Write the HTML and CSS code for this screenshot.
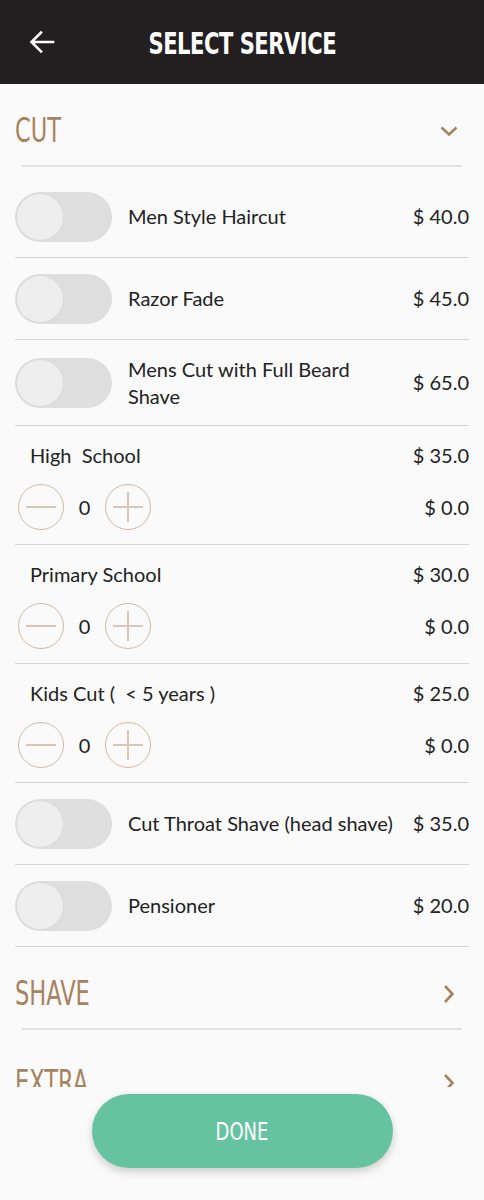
FILE: index.html
```html
<!DOCTYPE html>
<html lang="en">
<head>
    <meta charset="UTF-8">
    <meta name="viewport" content="width=device-width, initial-scale=1.0">
    <title>Select Service</title>
    <link rel="stylesheet" href="styles.css">
</head>
<body>
    <header class="topbar">
        <button class="back-btn" aria-label="Back">
            <svg width="26" height="26" viewBox="0 0 26 26"><path d="M24 13H3M12 3.5L2.5 13l9.5 9.5" fill="none" stroke="#fff" stroke-width="2.6" stroke-linecap="square"/></svg>
        </button>
        <h1><span class="narrow">SELECT SERVICE</span></h1>
    </header>

    <main class="list">
        <section class="group">
            <div class="group-head">
                <span class="narrow">CUT</span>
                <svg class="chev" width="18" height="18" viewBox="0 0 18 18"><path d="M1.5 5.5l7.5 7 7.5-7" fill="none" stroke="#a8835f" stroke-width="2.6"/></svg>
            </div>
            <div class="items">
                <div class="row">
                    <span class="toggle"><span class="knob"></span></span>
                    <span class="name">Men Style Haircut</span>
                    <span class="price">$ 40.0</span>
                </div>
                <div class="row">
                    <span class="toggle"><span class="knob"></span></span>
                    <span class="name">Razor Fade</span>
                    <span class="price">$ 45.0</span>
                </div>
                <div class="row">
                    <span class="toggle"><span class="knob"></span></span>
                    <span class="name">Mens Cut with Full Beard Shave</span>
                    <span class="price">$ 65.0</span>
                </div>
                <div class="qty-row">
                    <div class="qty-top">
                        <span class="qty-name">High&nbsp; School</span>
                        <span class="price">$ 35.0</span>
                    </div>
                    <div class="qty-bottom">
                        <div class="stepper">
                            <span class="step minus"></span>
                            <span class="count">0</span>
                            <span class="step plus"></span>
                        </div>
                        <span class="price">$ 0.0</span>
                    </div>
                </div>
                <div class="qty-row">
                    <div class="qty-top">
                        <span class="qty-name">Primary School</span>
                        <span class="price">$ 30.0</span>
                    </div>
                    <div class="qty-bottom">
                        <div class="stepper">
                            <span class="step minus"></span>
                            <span class="count">0</span>
                            <span class="step plus"></span>
                        </div>
                        <span class="price">$ 0.0</span>
                    </div>
                </div>
                <div class="qty-row">
                    <div class="qty-top">
                        <span class="qty-name">Kids Cut (&nbsp; &lt; 5 years )</span>
                        <span class="price">$ 25.0</span>
                    </div>
                    <div class="qty-bottom">
                        <div class="stepper">
                            <span class="step minus"></span>
                            <span class="count">0</span>
                            <span class="step plus"></span>
                        </div>
                        <span class="price">$ 0.0</span>
                    </div>
                </div>
                <div class="row">
                    <span class="toggle"><span class="knob"></span></span>
                    <span class="name">Cut Throat Shave (head shave)</span>
                    <span class="price">$ 35.0</span>
                </div>
                <div class="row">
                    <span class="toggle"><span class="knob"></span></span>
                    <span class="name">Pensioner</span>
                    <span class="price">$ 20.0</span>
                </div>
            </div>
        </section>

        <section class="group">
            <div class="group-head">
                <span class="narrow">SHAVE</span>
                <svg class="chev" width="18" height="18" viewBox="0 0 18 18"><path d="M5 1l7.5 8L5 17" fill="none" stroke="#a8835f" stroke-width="2.6"/></svg>
            </div>
        </section>

        <section class="group group-last">
            <div class="group-head">
                <span class="narrow">EXTRA</span>
                <svg class="chev" width="18" height="18" viewBox="0 0 18 18"><path d="M5 1l7.5 8L5 17" fill="none" stroke="#a8835f" stroke-width="2.6"/></svg>
            </div>
        </section>
    </main>

    <footer class="bottom">
        <button class="done-btn"><span class="narrow">DONE</span></button>
    </footer>
</body>
</html>
```

FILE: styles.css
```css
/* Base */
* {
    box-sizing: border-box;
}

body {
    margin: 0;
    height: 100vh;
    display: flex;
    flex-direction: column;
    background: #fafafa;
    font-family: Lato, "Open Sans", sans-serif;
    color: #222;
    overflow: hidden;
}

/* condensed look for headings */
.narrow {
    display: inline-block;
    font-family: "DejaVu Sans Condensed", "DejaVu Sans", sans-serif;
    transform: scaleX(0.8);
    transform-origin: left center;
}

/* Top bar */
.topbar {
    flex: 0 0 84px;
    background: #231f20;
    display: flex;
    align-items: center;
    position: relative;
}

.back-btn {
    background: none;
    border: none;
    padding: 0;
    margin-left: 29px;
    width: 26px;
    height: 26px;
    display: flex;
}

.topbar h1 {
    position: absolute;
    left: 0;
    right: 0;
    margin: 0;
    text-align: center;
    color: #fff;
    font-size: 30px;
    font-weight: bold;
    letter-spacing: -0.6px;
    pointer-events: none;
}

.topbar h1 .narrow {
    transform: scaleX(0.78);
    transform-origin: center;
}

/* List */
.list {
    flex: 1;
    overflow: hidden;
    padding: 0 15px;
}

.group-head {
    height: 83px;
    display: flex;
    align-items: center;
    justify-content: space-between;
    padding: 0 11px 0 0;
    position: relative;
    color: #a8835f;
    font-size: 33px;
    font-weight: normal;
}

.group-head::after {
    content: "";
    position: absolute;
    left: 7px;
    right: 7px;
    bottom: 0;
    height: 2px;
    background: #e2e2e2;
}

.group-head .narrow {
    padding-top: 10px;
    transform: scaleX(0.76);
}

.chev {
    margin-top: 10px;
}

.group-last {
    margin-top: 6px;
}

.items {
    padding-top: 9px;
    border-bottom: 1px solid #d6d6d6;
}

.row {
    display: flex;
    align-items: center;
    min-height: 81px;
    padding: 15.5px 0;
    border-bottom: 1px solid #d6d6d6;
    font-size: 20px;
    line-height: 27px;
}

.row:last-child,
.qty-row:last-child {
    border-bottom: none;
}

.toggle {
    flex: 0 0 97px;
    height: 50px;
    border-radius: 25px;
    background: #dedede;
    display: flex;
    align-items: center;
    padding-left: 1px;
}

.knob {
    width: 48px;
    height: 48px;
    border-radius: 50%;
    background: #eeeeee;
    border: 1.5px solid #dadada;
}

.name {
    flex: 1;
    padding: 0 10px 0 16px;
}

.price {
    white-space: nowrap;
    font-size: 20px;
}

/* Quantity rows */
.qty-row {
    padding: 16px 0 14px;
    border-bottom: 1px solid #d6d6d6;
    font-size: 20px;
    line-height: 27px;
}

.qty-top {
    display: flex;
    justify-content: space-between;
    padding-left: 15px;
}

.qty-bottom {
    display: flex;
    align-items: center;
    justify-content: space-between;
    margin-top: 15px;
    padding-left: 3px;
}

.stepper {
    display: flex;
    align-items: center;
}

.step {
    width: 46px;
    height: 46px;
    border-radius: 50%;
    border: 1.5px solid #d2b9a2;
    position: relative;
}

.step::before,
.step::after {
    content: "";
    position: absolute;
    background: #d9c6b4;
    left: 50%;
    top: 50%;
}

.step::before {
    width: 30px;
    height: 1.5px;
    margin: -0.75px 0 0 -15px;
}

.plus::after {
    width: 1.5px;
    height: 30px;
    margin: -15px 0 0 -0.75px;
}

.count {
    width: 41px;
    text-align: center;
}

/* Footer */
.bottom {
    flex: 0 0 113px;
    background: #fafafa;
    display: flex;
    justify-content: center;
    padding-top: 7px;
    position: relative;
}

.done-btn {
    width: 301px;
    height: 74px;
    border: none;
    border-radius: 37px;
    background: #66c3a2;
    color: #fff;
    font-size: 25px;
    box-shadow: 0 4px 8px rgba(0, 0, 0, 0.18);
    cursor: pointer;
}

.done-btn .narrow {
    transform: scaleX(0.8);
    transform-origin: center;
}
```
